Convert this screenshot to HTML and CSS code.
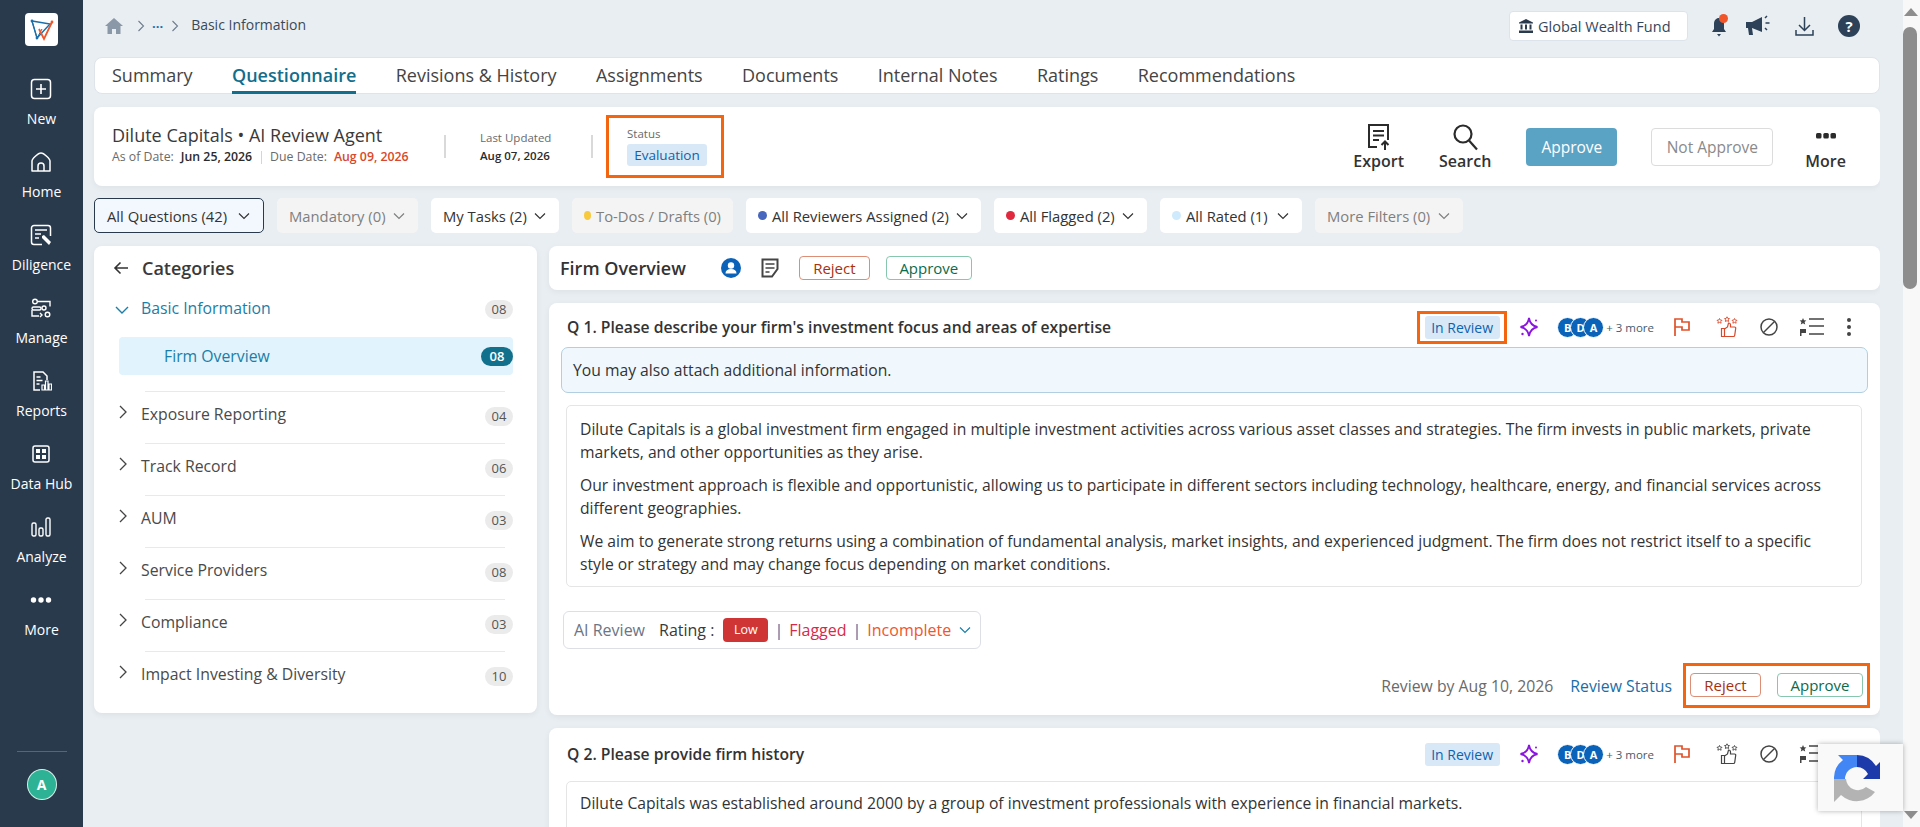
FILE: index.html
```html
<!DOCTYPE html>
<html lang="en">
<head>
  <meta charset="UTF-8">
  <title>Questionnaire - Basic Information</title>
  <link rel="stylesheet" href="styles.css">
</head>
<body>
<svg class="sprite" width="0" height="0">
  <defs>
    <symbol id="i-chev-r" viewBox="0 0 12 16"><path d="M3 2l6 6-6 6" fill="none" stroke="currentColor" stroke-width="1.3"/></symbol>
    <symbol id="i-chev-d" viewBox="0 0 16 12"><path d="M2 3l6 6 6-6" fill="none" stroke="currentColor" stroke-width="1.4"/></symbol>
    <symbol id="i-spark" viewBox="0 0 20 20"><path d="M10 1c.8 5 3 8 8.500 9-5.500 1-7.700 4-8.500 9-.8-5-3-8-8.500-9 5.500-1 7.700-4 8.500-9z" fill="none" stroke="#8a14e0" stroke-width="1.800"/><circle cx="17" cy="3.500" r="1" fill="#8a14e0"/><circle cx="3.500" cy="17" r="1.200" fill="#8a14e0"/></symbol>
    <symbol id="i-flag" viewBox="0 0 20 20"><path d="M3 19V2h7v3h7v8h-7v-3H3" fill="none" stroke="#e0522a" stroke-width="1.700"/></symbol>
    <symbol id="i-thumb" viewBox="0 0 22 22"><path d="M5.500 12.500h3v8h-3zM8.500 13l3-2 1-4c1.300 0 2 1 2 2v2h4c1 0 1.300.6 1.200 1.300l-1 7c-.1.700-.6 1.200-1.200 1.200h-9" fill="none" stroke="currentColor" stroke-width="1.200"/><path d="M3.500 2.500l.8 1.600 1.700.2-1.200 1.200.3 1.700-1.600-.8-1.600.8.300-1.700L1 4.300l1.700-.2zM11 .8l.8 1.600 1.700.2-1.200 1.200.3 1.700L11 4.700l-1.600.8.300-1.700-1.200-1.200 1.700-.2zM18.500 2.500l.8 1.600 1.700.2-1.200 1.200.3 1.700-1.600-.8-1.600.8.300-1.700L16 4.300l1.700-.2z" fill="none" stroke="currentColor" stroke-width=".9"/></symbol>
    <symbol id="i-ban" viewBox="0 0 20 20"><circle cx="10" cy="10" r="8" fill="none" stroke="#444" stroke-width="1.500"/><path d="M15.500 4.500l-11 11" stroke="#444" stroke-width="1.500"/></symbol>
    <symbol id="i-list" viewBox="0 0 26 20"><path d="M4 1l1 2.200 2.400.2-1.800 1.600.6 2.400L4 6.200 1.800 7.400l.6-2.400L.6 3.400 3 3.200z" fill="#444"/><path d="M1 12h6v4H2.500v3H1z" fill="#444"/><path d="M10 2h15M10 9h15M10 17h15" stroke="#444" stroke-width="1.500"/></symbol>
    <symbol id="i-dots" viewBox="0 0 6 20"><circle cx="3" cy="3" r="2" fill="#444"/><circle cx="3" cy="10" r="2" fill="#444"/><circle cx="3" cy="17" r="2" fill="#444"/></symbol>
  </defs>
</svg>

<aside class="sidebar">
  <div class="logo">
    <svg width="28" height="28" viewBox="0 0 28 28">
      <path d="M4 5l18 3-13 14z" fill="none" stroke="#1c6fa8" stroke-width="1.400"/>
      <path d="M4 5l5 17 5-9" fill="none" stroke="#1c6fa8" stroke-width="1"/>
      <path d="M11 13l5 10 8-17" fill="none" stroke="#f0562a" stroke-width="1.800"/>
      <circle cx="4" cy="5" r="1.400" fill="#1c6fa8"/><circle cx="9" cy="22" r="1.400" fill="#1c6fa8"/><circle cx="24" cy="6" r="1.400" fill="#f0562a"/>
    </svg>
  </div>
  <a class="nav-item">
    <svg width="22" height="22" viewBox="0 0 22 22"><rect x="1.500" y="1.500" width="19" height="19" rx="3" fill="none" stroke="#fff" stroke-width="1.500"/><path d="M11 6v10M6 11h10" stroke="#fff" stroke-width="1.600"/></svg>
    <span>New</span>
  </a>
  <a class="nav-item">
    <svg width="22" height="22" viewBox="0 0 22 22"><path d="M2 20V10c0-2 6-8 9-8s9 6 9 8v10z" fill="none" stroke="#fff" stroke-width="1.500" stroke-linejoin="round"/><path d="M8 20v-5a3 3 0 016 0v5" fill="none" stroke="#fff" stroke-width="1.500"/></svg>
    <span>Home</span>
  </a>
  <a class="nav-item">
    <svg width="22" height="22" viewBox="0 0 22 22"><path d="M12 20.500H4a2.500 2.500 0 01-2.500-2.500V4A2.500 2.500 0 014 1.500h14A2.500 2.500 0 0120.500 4v8" fill="none" stroke="#fff" stroke-width="1.500"/><path d="M5 6h12M5 10h6M5 14h4" stroke="#fff" stroke-width="1.500"/><path d="M12 12l2-1 7 7-2 3-7-7z" fill="#fff"/></svg>
    <span>Diligence</span>
  </a>
  <a class="nav-item">
    <svg width="20" height="20" viewBox="0 0 20 20" fill="none" stroke="#fff" stroke-width="1.400"><circle cx="4" cy="3.500" r="2.300"/><path d="M7 3.500h12v5"/><rect x="1" y="9" width="9" height="3" rx="1.500"/><circle cx="13" cy="10" r="2"/><path d="M1 12v6h7"/><circle cx="16.500" cy="16.500" r="2.300"/><path d="M9 15l2 2-2 2"/></svg>
    <span>Manage</span>
  </a>
  <a class="nav-item">
    <svg width="20" height="20" viewBox="0 0 20 20"><path d="M8 19H2V1h9l4 4v4" fill="none" stroke="#fff" stroke-width="1.500"/><path d="M4.500 6h4M4.500 9.500h6M4.500 13h3" stroke="#fff" stroke-width="1.300"/><path d="M10 19v-5h2.500v5zM13.500 19v-9H16v9zM17 19v-6h2.500v6z" fill="none" stroke="#fff" stroke-width="1.200"/></svg>
    <span>Reports</span>
  </a>
  <a class="nav-item">
    <svg width="18" height="18" viewBox="0 0 18 18"><rect x="1" y="1" width="16" height="16" rx="2" fill="none" stroke="#fff" stroke-width="1.500"/><rect x="4" y="4" width="4" height="4" fill="#fff"/><rect x="10" y="4" width="4" height="4" fill="#fff"/><rect x="4" y="10" width="4" height="4" fill="#fff"/><rect x="10" y="10" width="4" height="4" fill="#fff"/></svg>
    <span>Data Hub</span>
  </a>
  <a class="nav-item">
    <svg width="20" height="20" viewBox="0 0 20 20" fill="none" stroke="#fff" stroke-width="1.400"><rect x="1" y="6" width="4" height="13" rx="1.500"/><rect x="8" y="11" width="4" height="8" rx="1.500"/><rect x="15" y="1" width="4" height="18" rx="1.500"/></svg>
    <span>Analyze</span>
  </a>
  <a class="nav-item">
    <svg width="22" height="22" viewBox="0 0 22 22"><circle cx="3.500" cy="11" r="2.700" fill="#fff"/><circle cx="11" cy="11" r="2.700" fill="#fff"/><circle cx="18.500" cy="11" r="2.700" fill="#fff"/></svg>
    <span>More</span>
  </a>
  <div class="sidebar-foot">
    <div class="avatar">A</div>
  </div>
</aside>

<main class="main">
  <header class="topbar">
    <nav class="crumbs">
      <svg class="crumb-home" width="18" height="16" viewBox="0 0 18 16"><path d="M9 0l9 8h-2.500v8H11v-5H7v5H2.500V8H0z" fill="#8b98a8"/></svg>
      <svg class="crumb-sep" width="10" height="14"><use href="#i-chev-r"/></svg>
      <span class="crumb-more">...</span>
      <svg class="crumb-sep" width="10" height="14"><use href="#i-chev-r"/></svg>
      <span class="crumb-current">Basic Information</span>
    </nav>
    <div class="top-actions">
      <div class="fund-chip">
        <svg width="14" height="14" viewBox="0 0 14 14"><path d="M7 0l7 3.500v1H0v-1zM1.500 5.500h2v5h-2zM6 5.500h2v5H6zM10.500 5.500h2v5h-2zM0 11.500h14V14H0z" fill="#2a3a4d"/></svg>
        Global Wealth Fund
      </div>
      <div class="bell">
        <svg width="18" height="22" viewBox="0 0 18 22"><path d="M9 3c-3 0-5 2.500-5 6v5l-2 3h14l-2-3V9c0-3.500-2-6-5-6zM7 19h4l-2 2.500z" fill="#2d4258"/></svg>
        <i class="bell-dot"></i>
      </div>
      <svg class="top-megaphone" width="26" height="22" viewBox="0 0 26 22"><path d="M1 7h6l10-5v15L7 13l1 7H4l-1-7H1z" fill="#2d4258"/><path d="M20 3l2-2M20.500 8h4M20 13l2 2" stroke="#2d4258" stroke-width="1.500"/></svg>
      <svg class="top-download" width="19" height="20" viewBox="0 0 19 20"><path d="M9.500 1v13M4 9l5.500 5.500L15 9M1 14v5h17v-5" fill="none" stroke="#2d4258" stroke-width="1.500"/></svg>
      <div class="help">?</div>
    </div>
  </header>

  <nav class="tabs">
    <a class="tab">Summary</a>
    <a class="tab active">Questionnaire</a>
    <a class="tab">Revisions &amp; History</a>
    <a class="tab">Assignments</a>
    <a class="tab">Documents</a>
    <a class="tab">Internal Notes</a>
    <a class="tab">Ratings</a>
    <a class="tab">Recommendations</a>
  </nav>

  <section class="summary-card">
    <div class="summary-title">
      <h1>Dilute Capitals &bull; AI Review Agent</h1>
      <p class="dates">
        <span class="muted">As of Date:</span><b>Jun 25, 2026</b>
        <i class="thin-sep"></i>
        <span class="muted">Due Date:</span><b class="due">Aug 09, 2026</b>
      </p>
    </div>
    <div class="v-sep"></div>
    <div class="updated">
      <span>Last Updated</span>
      <b>Aug 07, 2026</b>
    </div>
    <div class="v-sep second"></div>
    <div class="status-box">
      <span>Status</span>
      <em>Evaluation</em>
    </div>
    <div class="summary-actions">
      <a class="tool">
        <svg width="24" height="28" viewBox="0 0 24 28"><path d="M10 24H2V2h19v15" fill="none" stroke="#2b2b2b" stroke-width="2"/><path d="M6 8h11M6 12.500h11M6 17h6" stroke="#2b2b2b" stroke-width="2"/><path d="M18 27v-8M14.500 22l3.500-3.500 3.500 3.500" fill="none" stroke="#2b2b2b" stroke-width="2"/></svg>
        <span>Export</span>
      </a>
      <a class="tool">
        <svg width="26" height="28" viewBox="0 0 26 28"><circle cx="11" cy="11" r="8.500" fill="none" stroke="#2b2b2b" stroke-width="2.200"/><path d="M17 17.500l8 9" stroke="#2b2b2b" stroke-width="2.200"/></svg>
        <span>Search</span>
      </a>
      <button class="btn-approve">Approve</button>
      <button class="btn-not">Not Approve</button>
      <a class="tool">
        <svg width="22" height="28" viewBox="0 0 22 28"><rect x="1" y="10" width="5.500" height="5.500" rx="1.500" fill="#2b2b2b"/><rect x="8.300" y="10" width="5.500" height="5.500" rx="1.500" fill="#2b2b2b"/><rect x="15.500" y="10" width="5.500" height="5.500" rx="1.500" fill="#2b2b2b"/></svg>
        <span>More</span>
      </a>
    </div>
  </section>

  <div class="filters">
    <button class="filter current">All Questions (42) <svg width="14" height="10"><use href="#i-chev-d"/></svg></button>
    <button class="filter off">Mandatory (0) <svg width="14" height="10"><use href="#i-chev-d"/></svg></button>
    <button class="filter">My Tasks (2) <svg width="14" height="10"><use href="#i-chev-d"/></svg></button>
    <button class="filter off"><i class="dot yellow"></i>To-Dos / Drafts (0)</button>
    <button class="filter"><i class="dot blue"></i>All Reviewers Assigned (2) <svg width="14" height="10"><use href="#i-chev-d"/></svg></button>
    <button class="filter"><i class="dot red"></i>All Flagged (2) <svg width="14" height="10"><use href="#i-chev-d"/></svg></button>
    <button class="filter"><i class="dot pale"></i>All Rated (1) <svg width="14" height="10"><use href="#i-chev-d"/></svg></button>
    <button class="filter off">More Filters (0) <svg width="14" height="10"><use href="#i-chev-d"/></svg></button>
  </div>

  <div class="split">
    <aside class="categories">
      <h2>
        <svg width="16" height="14" viewBox="0 0 16 14"><path d="M15 7H2M7.500 1.500L2 7l5.500 5.500" fill="none" stroke="#333" stroke-width="1.600"/></svg>
        Categories
      </h2>
      <div class="cat open">
        <svg class="cat-arrow" width="16" height="12"><use href="#i-chev-d"/></svg>
        <span>Basic Information</span><b class="count">08</b>
      </div>
      <div class="cat-sub"><span>Firm Overview</span><b class="count dark">08</b></div>
      <div class="cat first">
        <svg class="cat-arrow" width="12" height="16"><use href="#i-chev-r"/></svg>
        <span>Exposure Reporting</span><b class="count">04</b>
      </div>
      <div class="cat">
        <svg class="cat-arrow" width="12" height="16"><use href="#i-chev-r"/></svg>
        <span>Track Record</span><b class="count">06</b>
      </div>
      <div class="cat">
        <svg class="cat-arrow" width="12" height="16"><use href="#i-chev-r"/></svg>
        <span>AUM</span><b class="count">03</b>
      </div>
      <div class="cat">
        <svg class="cat-arrow" width="12" height="16"><use href="#i-chev-r"/></svg>
        <span>Service Providers</span><b class="count">08</b>
      </div>
      <div class="cat">
        <svg class="cat-arrow" width="12" height="16"><use href="#i-chev-r"/></svg>
        <span>Compliance</span><b class="count">03</b>
      </div>
      <div class="cat">
        <svg class="cat-arrow" width="12" height="16"><use href="#i-chev-r"/></svg>
        <span>Impact Investing &amp; Diversity</span><b class="count">10</b>
      </div>
    </aside>

    <div class="questions">
      <div class="section-head">
        <h2>Firm Overview</h2>
        <svg class="sec-user" width="20" height="20" viewBox="0 0 20 20"><circle cx="10" cy="10" r="10" fill="#0a63b8"/><circle cx="10" cy="7.500" r="3.200" fill="#fff"/><path d="M4.500 15.500c0-3 2-4.500 5.500-4.500s5.500 1.500 5.500 4.500z" fill="#fff"/></svg>
        <svg class="sec-note" width="18" height="20" viewBox="0 0 18 20"><path d="M16.500 11V1.500h-15v17H11z" fill="none" stroke="#444" stroke-width="2"/><path d="M4.500 6h9M4.500 10h9M4.500 14h4" stroke="#444" stroke-width="1.700"/></svg>
        <button class="btn-reject">Reject</button>
        <button class="btn-ok">Approve</button>
      </div>

      <article class="question">
        <div class="q-head">
          <h3>Q 1. Please describe your firm's investment focus and areas of expertise</h3>
          <div class="q-tools">
            <div class="flagged-box"><span class="badge">In Review</span></div>
            <svg class="t-spark" width="20" height="20"><use href="#i-spark"/></svg>
            <div class="people"><i>B</i><i>D</i><i>A</i></div>
            <span class="more-people">+ 3 more</span>
            <svg class="t-flag" width="20" height="20"><use href="#i-flag"/></svg>
            <svg class="t-thumb red" width="22" height="22"><use href="#i-thumb"/></svg>
            <svg class="t-ban" width="20" height="20"><use href="#i-ban"/></svg>
            <svg class="t-list" width="26" height="20"><use href="#i-list"/></svg>
            <svg class="t-dots" width="6" height="20"><use href="#i-dots"/></svg>
          </div>
        </div>
        <div class="q-info">You may also attach additional information.</div>
        <div class="answer">
          <p>Dilute Capitals is a global investment firm engaged in multiple investment activities across various asset classes and strategies. The firm invests in public markets, private markets, and other opportunities as they arise.</p>
          <p>Our investment approach is flexible and opportunistic, allowing us to participate in different sectors including technology, healthcare, energy, and financial services across different geographies.</p>
          <p>We aim to generate strong returns using a combination of fundamental analysis, market insights, and experienced judgment. The firm does not restrict itself to a specific style or strategy and may change focus depending on market conditions.</p>
        </div>
        <div class="ai-review">
          <span class="ai-label">AI Review</span>
          <span class="ai-rating">Rating :</span>
          <span class="low">Low</span>
          <span class="ai-bar">|</span>
          <span class="ai-flag">Flagged</span>
          <span class="ai-bar">|</span>
          <span class="ai-inc">Incomplete</span>
          <svg class="ai-chev" width="14" height="10"><use href="#i-chev-d"/></svg>
        </div>
        <div class="q-foot">
          <span class="review-by">Review by Aug 10, 2026</span>
          <a class="review-status">Review Status</a>
          <div class="foot-box">
            <button class="btn-reject">Reject</button>
            <button class="btn-ok">Approve</button>
          </div>
        </div>
      </article>

      <article class="question">
        <div class="q-head">
          <h3>Q 2. Please provide firm history</h3>
          <div class="q-tools">
            <div class="plain-box"><span class="badge">In Review</span></div>
            <svg class="t-spark" width="20" height="20"><use href="#i-spark"/></svg>
            <div class="people"><i>B</i><i>D</i><i>A</i></div>
            <span class="more-people">+ 3 more</span>
            <svg class="t-flag" width="20" height="20"><use href="#i-flag"/></svg>
            <svg class="t-thumb" width="22" height="22"><use href="#i-thumb"/></svg>
            <svg class="t-ban" width="20" height="20"><use href="#i-ban"/></svg>
            <svg class="t-list" width="26" height="20"><use href="#i-list"/></svg>
            <svg class="t-dots" width="6" height="20"><use href="#i-dots"/></svg>
          </div>
        </div>
        <div class="answer">
          <p>Dilute Capitals was established around 2000 by a group of investment professionals with experience in financial markets.</p>
        </div>
      </article>
    </div>
  </div>
</main>

<div class="scrollbar">
  <i class="arrow-up"></i>
  <div class="track"><div class="thumb"></div></div>
  <i class="arrow-down"></i>
</div>

<div class="recaptcha">
  <svg width="46" height="47" viewBox="0 0 46 47">
    <path d="M23 0A23 23 0 0 1 42 11L46 7V24H29L34 19A13 13 0 0 0 23 12Z" fill="#1c3aa9"/>
    <path d="M4 0H23V12A12 12 0 0 0 11 24H0A23 23 0 0 1 9 5Z" fill="#4285f4"/>
    <path d="M0 24H12A12 12 0 0 0 32 32L41 37A23 23 0 0 1 7 40L0 47Z" fill="#b3b3b3"/>
  </svg>
</div>
</body>
</html>
```

FILE: styles.css
```css
* {
  box-sizing: border-box;
}
html, body {
  height: 827px;
  overflow: hidden;
}
body {
  margin: 0;
  display: flex;
  font-family: "Open Sans", "Noto Sans", sans-serif;
  color: #333;
  background-color: #e9eef3;
}
button {
  font-family: inherit;
  cursor: pointer;
}
h1, h2, h3, p {
  margin: 0;
}
.sprite {
  position: absolute;
}

/* left nav */
.sidebar {
  width: 83px;
  flex-shrink: 0;
  height: 827px;
  background-color: #2a3a4d;
  display: flex;
  flex-direction: column;
  align-items: center;
  padding-top: 13px;
  color: #fff;
}
.logo {
  width: 33px;
  height: 33px;
  background-color: #fff;
  border-radius: 4px;
  display: flex;
  align-items: center;
  justify-content: center;
  margin-bottom: 32px;
}
.nav-item {
  height: 73px;
  display: flex;
  flex-direction: column;
  align-items: center;
  justify-content: flex-start;
  font-size: 14px;
  font-weight: 500;
}
.nav-item svg {
  height: 22px;
}
.nav-item span {
  margin-top: 9px;
  line-height: 20px;
}
.sidebar-foot {
  margin-top: auto;
  width: 50px;
  height: 76px;
  border-top: 1px solid #56657a;
  display: flex;
  justify-content: center;
  padding-top: 17px;
}
.avatar {
  width: 30px;
  height: 31px;
  border-radius: 50%;
  background-color: #2db295;
  border: 1px solid #d5efe9;
  font-size: 14px;
  font-weight: 700;
  display: flex;
  align-items: center;
  justify-content: center;
}

/* main column */
.main {
  width: 1797px;
  height: 827px;
  overflow: hidden;
  flex-shrink: 0;
  padding-left: 11px;
}
.topbar {
  height: 57px;
  display: flex;
  align-items: center;
  justify-content: space-between;
  padding-bottom: 5px;
}
.crumbs {
  display: flex;
  align-items: center;
  padding-left: 11px;
  color: #6d7c8c;
}
.crumb-sep {
  margin-left: 13px;
}
.crumb-more {
  margin-left: 6px;
  margin-right: -6px;
  color: #1c6fa8;
  font-size: 13px;
  font-weight: 700;
  line-height: 13px;
  padding-bottom: 6px;
}
.crumb-current {
  margin-left: 11px;
  font-size: 14px;
  font-weight: 500;
  color: #3a4a5a;
  padding-bottom: 3px;
}
.top-actions {
  display: flex;
  align-items: center;
  padding-right: 20px;
}
.fund-chip {
  width: 179px;
  height: 30px;
  background-color: #fff;
  border: 1px solid #dde3ea;
  border-radius: 4px;
  display: flex;
  align-items: center;
  gap: 5px;
  padding-left: 9px;
  font-size: 14.5px;
  color: #33475b;
}
.bell {
  position: relative;
  margin-left: 22px;
  height: 22px;
}
.bell-dot {
  position: absolute;
  top: -1px;
  right: 0;
  width: 9px;
  height: 9px;
  border-radius: 50%;
  background-color: #f0562a;
}
.top-megaphone {
  margin-left: 17px;
}
.top-download {
  margin-left: 24px;
}
.help {
  margin-left: 24px;
  width: 22px;
  height: 22px;
  border-radius: 50%;
  background-color: #2d4258;
  color: #fff;
  font-size: 15px;
  font-weight: 700;
  display: flex;
  align-items: center;
  justify-content: center;
}

/* tabs */
.tabs {
  width: 1786px;
  height: 37px;
  background-color: #fff;
  border: 1px solid #dfe4ea;
  border-radius: 8px;
  display: flex;
  gap: 39.4px;
  padding-left: 17px;
  font-size: 18px;
  color: #444;
}
.tab {
  line-height: 34px;
  height: 36px;
}
.tab.active {
  color: #116e8c;
  font-weight: 600;
  border-bottom: 3px solid #116e8c;
}

/* summary */
.summary-card {
  width: 1786px;
  height: 79px;
  margin-top: 13px;
  background-color: #fff;
  border-radius: 8px;
  box-shadow: 0 2px 6px rgba(0,0,0,0.05);
  display: flex;
  align-items: center;
  padding-left: 18px;
}
.summary-title {
  width: 332px;
  margin-top: -4px;
}
.summary-title h1 {
  font-size: 18px;
  font-weight: 400;
  line-height: 24px;
  color: #3a3a3a;
}
.dates {
  font-size: 12.3px;
  line-height: 20px;
  display: flex;
  align-items: center;
  white-space: pre;
}
.dates b {
  font-weight: 600;
  color: #2b2b2b;
  margin-left: 7px;
}
.dates b.due {
  color: #d9482b;
}
.muted {
  color: #6a6a6a;
}
.thin-sep {
  width: 1px;
  height: 13px;
  background-color: #cdd7e2;
  margin: 2px 8px 0 9px;
}
.v-sep {
  width: 2px;
  height: 23px;
  background-color: #d9d9d9;
}
.updated {
  margin-left: 34px;
  width: 111px;
  display: flex;
  flex-direction: column;
  font-size: 11.5px;
  line-height: 18px;
  color: #6a6a6a;
}
.updated b {
  font-weight: 600;
  color: #2b2b2b;
}
.status-box {
  margin-left: 13px;
  width: 118px;
  height: 63px;
  border: 3px solid #f4650f;
  padding: 7px 0 0 18px;
  font-size: 11.5px;
  line-height: 17px;
  color: #6a6a6a;
}
.status-box span {
  display: block;
}
.status-box em {
  display: block;
  width: 80px;
  height: 22px;
  margin-top: 2px;
  background-color: #d8e8f7;
  border-radius: 3px;
  font-style: normal;
  font-size: 13.5px;
  line-height: 22px;
  text-align: center;
  color: #0f62ad;
}
.summary-actions {
  margin-left: auto;
  display: flex;
  align-items: center;
}
.tool {
  display: flex;
  flex-direction: column;
  align-items: center;
  font-size: 16px;
  font-weight: 600;
  line-height: 20px;
  color: #333;
}
.tool:nth-child(2) {
  margin-left: 35px;
}
.btn-approve {
  margin-left: 35px;
  width: 91px;
  height: 38px;
  background-color: #5ba3c5;
  border: none;
  border-radius: 4px;
  color: #fff;
  font-size: 15.5px;
  font-weight: 500;
}
.btn-not {
  margin-left: 34px;
  width: 122px;
  height: 38px;
  background-color: #fff;
  border: 1px solid #dcdcdc;
  border-radius: 4px;
  color: #8a8a8a;
  font-size: 15.5px;
}
.tool:last-child {
  margin-left: 32px;
  margin-right: 34px;
}

/* filters */
.filters {
  margin-top: 12px;
  height: 35px;
  display: flex;
  gap: 13px;
}
.filter {
  height: 35px;
  display: flex;
  align-items: center;
  gap: 5px;
  padding: 0 12px;
  background-color: #fff;
  border: none;
  border-radius: 5px;
  font-size: 14.8px;
  color: #333;
  white-space: nowrap;
}
.filter svg {
  margin-left: auto;
}
.filter:nth-child(1) { width: 170px; }
.filter:nth-child(2) { width: 141px; }
.filter:nth-child(3) { width: 128px; }
.filter:nth-child(4) { width: 161px; }
.filter:nth-child(5) { width: 235px; }
.filter:nth-child(6) { width: 153px; }
.filter:nth-child(7) { width: 142px; }
.filter:nth-child(8) { width: 148px; }
.filter.current {
  background-color: #f2f8fd;
  border: 1px solid #2a3a4d;
  font-weight: 500;
}
.filter.off {
  background-color: #f4f4f4;
  color: #7f7f7f;
}
.dot {
  width: 9px;
  height: 9px;
  border-radius: 50%;
}
.dot.yellow { background-color: #f8c93a; }
.dot.blue { background-color: #4766bd; }
.dot.red { background-color: #e0293f; }
.dot.pale { background-color: #cfeafc; }

/* two columns */
.split {
  margin-top: 13px;
  width: 1786px;
  display: flex;
  gap: 12px;
  align-items: flex-start;
}
.categories {
  width: 443px;
  height: 467px;
  flex-shrink: 0;
  background-color: #fff;
  border-radius: 8px;
  box-shadow: 0 2px 6px rgba(0,0,0,0.06);
  padding: 0 24px 0 19px;
}
.categories h2 {
  height: 44px;
  display: flex;
  align-items: center;
  gap: 13px;
  font-size: 18px;
  font-weight: 600;
  color: #3a3a3a;
}
.cat {
  height: 52px;
  display: flex;
  align-items: center;
  font-size: 15.8px;
  color: #4a4a4a;
  border-top: 1px solid #e9e9e9;
  margin: 0 8px 0 32px;
  position: relative;
}
.cat span {
  margin: -7px 0 0 -4px;
}
.cat-arrow {
  position: absolute;
  left: -28px;
  top: 12px;
  color: #444;
}
.cat.open {
  height: 47px;
  border-top: none;
  color: #1a7ea8;
  align-items: flex-start;
  padding-top: 9px;
}
.cat.open .cat-arrow {
  left: -31px;
  top: 14px;
  color: #1a7ea8;
}
.cat.open span {
  margin-top: -2px;
}
.cat.open .count {
  margin-top: 1px;
}
.cat.first {
  margin-top: 16px;
}
.count {
  margin-left: auto;
  margin-right: -8px;
  width: 28px;
  height: 19px;
  border-radius: 10px;
  background-color: #ebebeb;
  color: #555;
  font-size: 13px;
  font-weight: 400;
  line-height: 19px;
  text-align: center;
}
.cat:not(.open) .count {
  margin-top: -3px;
}
.cat-sub {
  margin-left: 6px;
  height: 38px;
  display: flex;
  align-items: center;
  padding-left: 45px;
  background-color: #e1f3fd;
  border-radius: 4px;
  font-size: 15.8px;
  color: #1a7ea8;
}
.cat-sub .count {
  margin-right: 0;
}
.count.dark {
  width: 32px;
  background-color: #11708c;
  color: #fff;
  font-weight: 600;
}

/* questions */
.questions {
  flex: 1;
  display: flex;
  flex-direction: column;
  gap: 13px;
}
.section-head {
  height: 44px;
  background-color: #fff;
  border-radius: 8px;
  box-shadow: 0 2px 6px rgba(0,0,0,0.05);
  display: flex;
  align-items: center;
  padding-left: 11px;
}
.section-head h2 {
  font-size: 18px;
  font-weight: 600;
  color: #333;
}
.sec-user {
  margin-left: 35px;
}
.sec-note {
  margin-left: 20px;
}
.btn-reject, .btn-ok {
  height: 24px;
  background-color: #fff;
  border-radius: 4px;
  font-size: 15px;
  padding: 0;
}
.btn-reject {
  width: 71px;
  border: 1px solid #dc8f76;
  color: #a8300e;
}
.btn-ok {
  width: 86px;
  border: 1px solid #88c7ad;
  color: #0c6b4d;
  margin-left: 16px;
}
.section-head .btn-reject {
  margin-left: 20px;
}
.question {
  background-color: #fff;
  border-radius: 8px;
  box-shadow: 0 2px 6px rgba(0,0,0,0.06);
  padding: 0 12px;
}
.q-head {
  height: 44px;
  display: flex;
  align-items: center;
  padding: 4px 0 0 6px;
}
.q-head h3 {
  font-size: 15.7px;
  font-weight: 600;
  color: #333;
}
.q-tools {
  margin-left: auto;
  display: flex;
  align-items: center;
  color: #444;
}
.flagged-box, .plain-box {
  width: 90px;
  height: 33px;
  display: flex;
  align-items: center;
  justify-content: center;
}
.flagged-box {
  border: 3px solid #f4650f;
}
.badge {
  width: 75px;
  height: 23px;
  border-radius: 3px;
  background-color: #d8e8f7;
  color: #0f62ad;
  font-size: 14px;
  line-height: 23px;
  text-align: center;
}
.t-spark {
  margin-left: 12px;
}
.people {
  margin-left: 18px;
  display: flex;
}
.people i {
  width: 21px;
  height: 21px;
  border-radius: 50%;
  background-color: #0a63b8;
  border: 1px solid #fff;
  color: #fff;
  font-size: 11px;
  font-style: normal;
  font-weight: 700;
  line-height: 19px;
  text-align: center;
  margin-left: -8px;
}
.people i:first-child {
  margin-left: 0;
}
.more-people {
  margin-left: 2px;
  font-size: 11.5px;
  font-weight: 500;
  color: #4a5a6a;
}
.t-flag {
  margin-left: 18px;
}
.t-thumb {
  margin-left: 24px;
}
.t-thumb.red {
  color: #d9482b;
}
.t-ban {
  margin-left: 21px;
}
.t-list {
  margin-left: 20px;
}
.t-dots {
  margin-left: 21px;
  margin-right: 16px;
}
.q-info {
  height: 46px;
  background-color: #f0f8fe;
  border: 1px solid #b1cfe0;
  border-radius: 7px;
  padding-left: 11px;
  font-size: 15.7px;
  line-height: 44px;
  color: #333;
}
.answer {
  margin: 12px 6px 0 5px;
  border: 1px solid #e5e5e5;
  border-radius: 5px;
  padding: 12px 13px 0;
  height: 182px;
  font-size: 15.7px;
  line-height: 23px;
  color: #333;
}
.answer p {
  margin-bottom: 10px;
}
.question + .question .q-head {
  padding-top: 8px;
}
.question + .question .answer {
  margin-top: 9px;
  padding-top: 10px;
}
.ai-review {
  margin: 24px 0 0 2px;
  width: 418px;
  height: 38px;
  border: 1px solid #dcdfe6;
  border-radius: 6px;
  display: flex;
  align-items: center;
  padding-left: 10px;
  font-size: 16px;
  font-weight: 500;
}
.ai-label {
  color: #6a7585;
}
.ai-rating {
  margin-left: 14px;
  color: #3a3a3a;
}
.low {
  margin-left: 9px;
  width: 45px;
  height: 24px;
  border-radius: 4px;
  background-color: #d03536;
  color: #fff;
  font-size: 12.5px;
  font-weight: 400;
  line-height: 24px;
  text-align: center;
}
.ai-bar {
  margin: 0 6px;
  font-weight: 400;
  color: #1c6fa8;
}
.ai-flag {
  color: #d9294a;
}
.ai-inc {
  color: #f0562a;
}
.ai-chev {
  margin-left: 7px;
  color: #1a7ea8;
}
.q-foot {
  height: 66px;
  display: flex;
  align-items: center;
  justify-content: flex-end;
  font-size: 15.8px;
  margin-right: -2px;
  padding-top: 6px;
}
.review-by {
  margin-top: 1px;
  color: #6a6a6a;
}
.review-status {
  margin-top: 1px;
  margin-left: 17px;
  color: #1a6ea8;
}
.foot-box {
  margin-left: 11px;
  width: 187px;
  height: 45px;
  border: 3px solid #f4650f;
  display: flex;
  align-items: center;
  padding-left: 4px;
}

/* fake window scrollbar */
.scrollbar {
  width: 40px;
  height: 827px;
  flex-shrink: 0;
  display: flex;
  flex-direction: column;
  align-items: flex-end;
  background: linear-gradient(to right, #e9eef3 23px, #f8f8f8 23px);
}
.track {
  flex: 1;
  width: 17px;
}
.thumb {
  width: 14px;
  height: 262px;
  margin-top: 3px;
  background-color: #8d8d8d;
  border-radius: 7px;
}
.arrow-up, .arrow-down {
  width: 0;
  height: 0;
  border-left: 7px solid transparent;
  border-right: 7px solid transparent;
  margin: 8px 2px;
}
.arrow-up {
  border-bottom: 8px solid #8d8d8d;
}
.arrow-down {
  border-top: 8px solid #8d8d8d;
}

/* recaptcha badge, sits over the page */
.recaptcha {
  position: fixed;
  right: 17px;
  top: 744px;
  width: 85px;
  height: 67px;
  background-color: #f9f9f9;
  box-shadow: 0 0 5px rgba(0,0,0,0.3);
  padding: 11px 0 0 16px;
}
```
